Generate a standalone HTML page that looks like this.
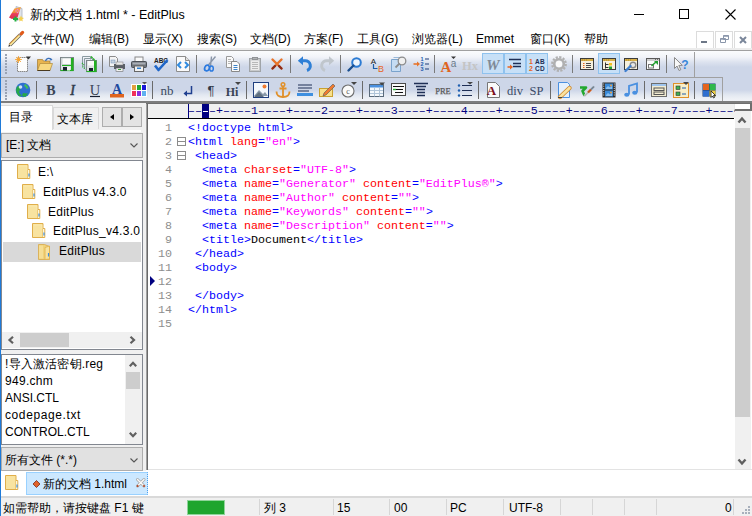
<!DOCTYPE html><html><head><meta charset="utf-8"><style>
*{margin:0;padding:0;box-sizing:border-box}
html,body{width:752px;height:516px;overflow:hidden;background:#f0f0f0}
body{position:relative;font-family:"Liberation Sans",sans-serif;font-size:12px;color:#000}
.a{position:absolute}
.t{position:absolute;white-space:nowrap;line-height:12px;height:12px}
.ico{position:absolute;overflow:visible}
.code{position:absolute;font-family:"Liberation Mono",monospace;font-size:11.667px;line-height:14px;height:14px;white-space:pre;color:#0000ff}
.ln{position:absolute;font-family:"Liberation Mono",monospace;font-size:11.667px;line-height:14px;height:14px;color:#8e8e8e;white-space:pre}
.r{color:#ff0000}.m{color:#ff00ff}.k{color:#000}
</style></head><body>
<div class="a" style="left:0px;top:0px;width:752px;height:48px;background:#fff"></div>
<svg class="ico" style="left:8px;top:5px" width="16" height="16" viewBox="0 0 16 16"><defs><linearGradient id="tg" x1="0" y1="0" x2="0" y2="1"><stop offset="0" stop-color="#f5a84a"/><stop offset="0.45" stop-color="#f08a3a"/><stop offset="0.55" stop-color="#e8405a"/><stop offset="1" stop-color="#e02a50"/></linearGradient></defs><path d="M8 1.5l6 2v9.5l-5 2.5z" fill="#dfe3ea" stroke="#aab2c0" stroke-width="0.8"/><path d="M1 12.5L6.5 3.5 13 2l-3.5 10.5L4 14z" fill="url(#tg)"/><circle cx="9.5" cy="4.5" r="0.8" fill="#f080e0"/><circle cx="8" cy="6" r="0.8" fill="#f080e0"/><circle cx="11" cy="6" r="0.8" fill="#f080e0"/><circle cx="9.5" cy="7.5" r="0.8" fill="#f080e0"/><path d="M5 14h5M7.5 11.5v5" stroke="#20b040" stroke-width="2"/><path d="M13 10.5l0.9 2 2.1 0.4-1.6 1.4 0.4 2.1-1.8-1-1.8 1 0.4-2.1-1.6-1.4 2.1-0.4z" fill="#f4d050"/></svg>
<div class="t" style="left:30px;top:9px;font-size:12.5px;color:#000;">新的文档 1.html * - EditPlus</div>
<div class="a" style="left:634px;top:14px;width:10px;height:1px;background:#000"></div>
<div class="a" style="left:679px;top:9px;width:10px;height:10px;border:1px solid #000"></div>
<svg class="ico" style="left:725px;top:9px" width="11" height="11" viewBox="0 0 11 11"><path d="M0.5 0.5L10.5 10.5M10.5 0.5L0.5 10.5" stroke="#000" stroke-width="1.1"/></svg>
<div class="t" style="left:31px;top:33px;font-size:12px;color:#000;">文件(W)</div>
<div class="t" style="left:89px;top:33px;font-size:12px;color:#000;">编辑(B)</div>
<div class="t" style="left:143px;top:33px;font-size:12px;color:#000;">显示(X)</div>
<div class="t" style="left:197px;top:33px;font-size:12px;color:#000;">搜索(S)</div>
<div class="t" style="left:250px;top:33px;font-size:12px;color:#000;">文档(D)</div>
<div class="t" style="left:304px;top:33px;font-size:12px;color:#000;">方案(F)</div>
<div class="t" style="left:357px;top:33px;font-size:12px;color:#000;">工具(G)</div>
<div class="t" style="left:412px;top:33px;font-size:12px;color:#000;">浏览器(L)</div>
<div class="t" style="left:476px;top:33px;font-size:12px;color:#000;">Emmet</div>
<div class="t" style="left:530px;top:33px;font-size:12px;color:#000;">窗口(K)</div>
<div class="t" style="left:584px;top:33px;font-size:12px;color:#000;">帮助</div>
<svg class="ico" style="left:8px;top:31px" width="16" height="16" viewBox="0 0 16 16"><path d="M2 14L12 4" stroke="#5a5a5a" stroke-width="3.4"/><path d="M2 14L12 4" stroke="#f8e8a0" stroke-width="2.2"/><path d="M1.3 13.3L11.3 3.3" stroke="#e8942a" stroke-width="1"/><path d="M11.5 4.5L13.5 2.5" stroke="#9aa0aa" stroke-width="3"/><path d="M13.2 2.8L14.6 1.4" stroke="#e05a1a" stroke-width="3.2" stroke-linecap="round"/><path d="M0.3 15.7L1 13.5 2.5 15z" fill="#222"/></svg>
<div class="a" style="left:696px;top:31px;width:18px;height:18px;border:1px solid #dcdcdc;background:#fff"></div>
<div class="a" style="left:715px;top:31px;width:18px;height:18px;border:1px solid #dcdcdc;background:#fff"></div>
<div class="a" style="left:734px;top:31px;width:18px;height:18px;border:1px solid #dcdcdc;background:#fff"></div>
<div class="a" style="left:701px;top:41px;width:6px;height:2px;background:#6d7787"></div>
<svg class="ico" style="left:720px;top:35px" width="9" height="8" viewBox="0 0 9 8"><path d="M3.5 0.5h5v4h-5zM0.5 3.5h5v4h-5z" fill="#fff" stroke="#8a96aa" stroke-width="1"/><path d="M3.5 1h5M0.5 4h5" stroke="#8a96aa" stroke-width="1.3"/></svg>
<svg class="ico" style="left:739px;top:36px" width="8" height="8" viewBox="0 0 8 8"><path d="M1 1l6 6M7 1L1 7" stroke="#7a869a" stroke-width="2"/></svg>
<div class="a" style="left:0px;top:48px;width:752px;height:2px;background:#ececec"></div>
<div class="a" style="left:0px;top:50px;width:752px;height:1px;background:#a0a0a0"></div>
<div class="a" style="left:0px;top:51px;width:752px;height:50px;background:linear-gradient(#fbfcfd 0px,#f2f4f9 6px,#dde3ef 11px,#cdd6e8 16px,#cdd6e8 39px,#e3e8f1 44px,#eef1f6 48px,#f0f2f7 50px)"></div>
<div class="a" style="left:0px;top:77px;width:723px;height:24px;border-top:1px solid #a0a0a0;border-right:1px solid #a0a0a0"></div>
<div class="a" style="left:694px;top:52px;width:1px;height:25px;background:#a0a0a0"></div>
<div class="a" style="left:0px;top:101px;width:752px;height:2px;background:#7d7d7d"></div>
<div class="a" style="left:5px;top:54px;width:2px;height:2px;background:#9aa3b3"></div>
<div class="a" style="left:5px;top:57px;width:2px;height:2px;background:#9aa3b3"></div>
<div class="a" style="left:5px;top:60px;width:2px;height:2px;background:#9aa3b3"></div>
<div class="a" style="left:5px;top:63px;width:2px;height:2px;background:#9aa3b3"></div>
<div class="a" style="left:5px;top:66px;width:2px;height:2px;background:#9aa3b3"></div>
<div class="a" style="left:5px;top:69px;width:2px;height:2px;background:#9aa3b3"></div>
<div class="a" style="left:5px;top:72px;width:2px;height:2px;background:#9aa3b3"></div>
<div class="a" style="left:5px;top:80px;width:2px;height:2px;background:#9aa3b3"></div>
<div class="a" style="left:5px;top:83px;width:2px;height:2px;background:#9aa3b3"></div>
<div class="a" style="left:5px;top:86px;width:2px;height:2px;background:#9aa3b3"></div>
<div class="a" style="left:5px;top:89px;width:2px;height:2px;background:#9aa3b3"></div>
<div class="a" style="left:5px;top:92px;width:2px;height:2px;background:#9aa3b3"></div>
<div class="a" style="left:5px;top:95px;width:2px;height:2px;background:#9aa3b3"></div>
<div class="a" style="left:5px;top:98px;width:2px;height:2px;background:#9aa3b3"></div>
<div class="a" style="left:482px;top:53px;width:22px;height:21px;background:#c7e0f7;border:1px solid #8fc2ee"></div>
<div class="a" style="left:504px;top:53px;width:22px;height:21px;background:#c7e0f7;border:1px solid #8fc2ee"></div>
<div class="a" style="left:526px;top:53px;width:22px;height:21px;background:#c7e0f7;border:1px solid #8fc2ee"></div>
<div class="a" style="left:598px;top:53px;width:22px;height:21px;background:#c7e0f7;border:1px solid #8fc2ee"></div>
<svg class="ico" style="left:15px;top:56px" width="16" height="16" viewBox="0 0 16 16"><path d="M2.5 1.5h10v14h-10z" fill="#fdfdfd" stroke="#8a8a8a" stroke-dasharray="1.5 0.5"/><circle cx="3.5" cy="3.5" r="2" fill="#fbc04a"/><path d="M3.5 0v7M0 3.5h7M1 1l5 5M6 1L1 6" stroke="#f5a030" stroke-width="0.8"/><path d="M11 0.5h5l-2.5 3z" fill="#333"/></svg>
<svg class="ico" style="left:37px;top:56px" width="16" height="16" viewBox="0 0 16 16"><path d="M0.5 3.5h5l1 1.5h6.5v9.5H0.5z" fill="#e8b450" stroke="#a07a30" stroke-width="0.7"/><path d="M3 7.5h12.5l-2.5 7H0.5z" fill="#f8d880" stroke="#b08a3a" stroke-width="0.7"/><path d="M0.5 14.5h12.5" stroke="#4a3a20" stroke-width="1"/><path d="M8.5 5c1-3 4-3.5 5.5-1.5" fill="none" stroke="#3a70b8" stroke-width="1.3"/><path d="M13 2l2.5 1.2-1.8 1.8z" fill="#3a70b8"/></svg>
<svg class="ico" style="left:59px;top:56px" width="16" height="16" viewBox="0 0 16 16"><rect x="1.5" y="1.5" width="13" height="13" fill="#dfe3e6" stroke="#7d8488"/><rect x="3" y="2" width="9" height="6.5" fill="#fafafa" stroke="#9aa" stroke-width="0.5"/><path d="M3 9.5h9" stroke="#22b022" stroke-width="1"/><rect x="12" y="2" width="2.5" height="12.5" fill="#22b022"/><path d="M1.5 14.5h13" stroke="#22b022" stroke-width="1.2"/><rect x="4" y="11" width="4" height="3.5" fill="#1a2030"/><rect x="8" y="11" width="3" height="3.5" fill="#f4f4f4"/></svg>
<svg class="ico" style="left:81px;top:56px" width="16" height="16" viewBox="0 0 16 16"><path d="M1.5 0.5h8v3M1.5 0.5v10" fill="none" stroke="#8a9aa0"/><path d="M3.5 2.5h8v3M3.5 2.5v10" fill="none" stroke="#8a9aa0"/><path d="M1.5 10.5l3 3M1 7l2 2" stroke="#22b022" stroke-width="1.2" stroke-dasharray="1 1"/><rect x="5.5" y="4.5" width="10" height="11" fill="#dfe3e6" stroke="#7d8488"/><rect x="7" y="5" width="6" height="4.5" fill="#fafafa"/><rect x="13" y="4.5" width="2.5" height="11" fill="#22b022"/><path d="M5.5 15.5h10" stroke="#22b022" stroke-width="1.2"/><rect x="8" y="12" width="4" height="3" fill="#1a2030"/><path d="M10 0.5l1.5 1.5M12 2.5l1.5 1.5" stroke="#22b022" stroke-width="1.5"/></svg>
<svg class="ico" style="left:109px;top:56px" width="16" height="16" viewBox="0 0 16 16"><path d="M0.5 0.5h6l2 2v8h-8z" fill="#f4f4f4" stroke="#8c8c8c"/><rect x="2" y="4" width="4" height="3" fill="#c8d3e0" stroke="#6f8fb8" stroke-width="0.5"/>
<rect x="5" y="8" width="11" height="5" fill="#5a5f66"/><rect x="7" y="6" width="7" height="3" fill="#e8e8e8" stroke="#777" stroke-width="0.5"/><rect x="7" y="12" width="7" height="3.5" fill="#f0f0f0" stroke="#555" stroke-width="0.5"/><rect x="9" y="13" width="3" height="1" fill="#3b9c3b"/></svg>
<svg class="ico" style="left:131px;top:56px" width="16" height="16" viewBox="0 0 16 16"><rect x="4" y="1" width="8" height="5" fill="#fafafa" stroke="#888"/><rect x="0.5" y="5.5" width="15" height="6" rx="1" fill="#6e747c" stroke="#4b5057"/>
<rect x="1.5" y="6.5" width="13" height="2" fill="#a9aeb5"/><rect x="3.5" y="10" width="9" height="5.5" fill="#f2f2f2" stroke="#666"/><rect x="6" y="11.5" width="4" height="1.5" fill="#2f7fd0"/></svg>
<svg class="ico" style="left:153px;top:56px" width="16" height="16" viewBox="0 0 16 16"><text x="8" y="6.5" font-family="Liberation Sans" font-size="6.5" font-weight="bold" text-anchor="middle" fill="#222">ABC</text>
<path d="M2 9.5l3.5 4.5L14.5 4" fill="none" stroke="#1f66c8" stroke-width="2.6" stroke-linejoin="round"/></svg>
<svg class="ico" style="left:175px;top:56px" width="16" height="16" viewBox="0 0 16 16"><path d="M1.5 0.5h9l4 4v11h-13z" fill="#fafafa" stroke="#8c8c8c"/><path d="M10.5 0.5v4h4" fill="#e0e0e0" stroke="#8c8c8c"/>
<path d="M6 6l-3 3 3 3M10 6l3 3-3 3" fill="none" stroke="#2f8ae0" stroke-width="2"/></svg>
<svg class="ico" style="left:203px;top:56px" width="16" height="16" viewBox="0 0 16 16"><path d="M5 9.5L12.5 0.5M7.5 10L8.5 0.5" stroke="#8a96a8" stroke-width="1.4"/><ellipse cx="4" cy="12" rx="2.3" ry="3" fill="none" stroke="#2b7ae0" stroke-width="1.7" transform="rotate(20 4 12)"/><ellipse cx="8.5" cy="12.5" rx="1.8" ry="2.6" fill="none" stroke="#2b7ae0" stroke-width="1.5"/></svg>
<svg class="ico" style="left:225px;top:56px" width="16" height="16" viewBox="0 0 16 16"><path d="M1.5 0.5h5l2 2v9h-7z" fill="#fafafa" stroke="#999"/><path d="M3 3.5h3M3 5.5h4M3 7.5h4" stroke="#b5b5b5"/><path d="M6.5 5.5h5.5l2.5 2.5v7.5h-8z" fill="#fafafa" stroke="#888"/><path d="M8.5 9.5h4M8.5 11.5h4M8.5 13.5h4" stroke="#3b82c8"/></svg>
<svg class="ico" style="left:247px;top:56px" width="16" height="16" viewBox="0 0 16 16"><rect x="2.5" y="2.5" width="11" height="13" fill="#c8cacc" stroke="#a0a4a8"/><rect x="5.5" y="1.5" width="5" height="2" fill="#b0b3b6" stroke="#909396"/><rect x="4" y="4.5" width="8" height="9.5" fill="#ececec"/><path d="M5 6.5h6M5 8.5h6M5 10.5h6M5 12.5h6" stroke="#b8b8b8"/></svg>
<svg class="ico" style="left:269px;top:56px" width="16" height="16" viewBox="0 0 16 16"><path d="M3.5 3.5l9 9M12.5 3.5l-9 9" stroke="#e8742a" stroke-width="2.4" stroke-linecap="round"/><path d="M3.5 12.5l2.5-2.5M12.5 12.5L10 10" stroke="#8a2a1a" stroke-width="2.2" stroke-linecap="round"/></svg>
<svg class="ico" style="left:297px;top:56px" width="16" height="16" viewBox="0 0 16 16"><path d="M5 4.8h3a5 5 0 0 1 2 9.7" fill="none" stroke="#2e7fd6" stroke-width="3"/><path d="M0.8 4.8L6 0.3v9z" fill="#2e7fd6"/></svg>
<svg class="ico" style="left:319px;top:56px" width="16" height="16" viewBox="0 0 16 16"><path d="M11 4.8H8a5 5 0 0 0 -2 9.7" fill="none" stroke="#c0c6cc" stroke-width="3"/><path d="M15.2 4.8L10 0.3v9z" fill="#c0c6cc"/></svg>
<svg class="ico" style="left:347px;top:56px" width="16" height="16" viewBox="0 0 16 16"><circle cx="9.5" cy="6.5" r="4.3" fill="#eef5fc" stroke="#2c7bd3" stroke-width="2"/><path d="M6.5 9.5L1.5 14.5" stroke="#1b4f8f" stroke-width="2.4" stroke-linecap="round"/></svg>
<svg class="ico" style="left:369px;top:56px" width="16" height="16" viewBox="0 0 16 16"><text x="4.5" y="7.5" font-family="Liberation Sans" font-size="8" text-anchor="middle" fill="#222">A</text>
<path d="M4.5 8v4.5h4" fill="none" stroke="#1b5ea8" stroke-width="1.2"/><text x="12" y="15.5" font-family="Liberation Sans" font-size="9" text-anchor="middle" fill="#e8641e">B</text></svg>
<svg class="ico" style="left:391px;top:56px" width="16" height="16" viewBox="0 0 16 16"><path d="M0.5 3.5h9v12h-9z" fill="#c5dcf3" stroke="#7aa3cc"/><path d="M2.5 1.5h9v3" fill="none" stroke="#9bb9d8"/>
<circle cx="11" cy="5" r="3.8" fill="#f0f0f0" stroke="#8c8c8c" stroke-width="1.3"/><path d="M8.5 7.5l-4 4" stroke="#8c8c8c" stroke-width="1.8"/></svg>
<svg class="ico" style="left:413px;top:56px" width="16" height="16" viewBox="0 0 16 16"><path d="M0.5 8h5" stroke="#e8742a" stroke-width="1.6"/><path d="M4 5.5l3 2.5-3 2.5z" fill="#e8742a"/>
<text x="9" y="5" font-family="Liberation Sans" font-size="5.5" font-weight="bold" text-anchor="middle" fill="#1f5cae">1</text><text x="9" y="10" font-family="Liberation Sans" font-size="5.5" font-weight="bold" text-anchor="middle" fill="#1f5cae">2</text><text x="9" y="15" font-family="Liberation Sans" font-size="5.5" font-weight="bold" text-anchor="middle" fill="#1f5cae">3</text>
<path d="M12 3h4M12 8h4M12 13h4" stroke="#1f3f7a" stroke-width="1.2"/></svg>
<svg class="ico" style="left:441px;top:56px" width="16" height="16" viewBox="0 0 16 16"><text x="5" y="16" font-family="Liberation Serif" font-size="15" font-weight="bold" text-anchor="middle" fill="#e0641e">A</text><text x="12.5" y="10.5" font-family="Liberation Sans" font-size="10" text-anchor="middle" fill="#6a7a8a">a</text><path d="M10 0.5h5l-2.5 2.5z" fill="#333"/></svg>
<svg class="ico" style="left:463px;top:56px" width="16" height="16" viewBox="0 0 16 16"><text x="7" y="14" font-family="Liberation Serif" font-size="12.5" font-weight="bold" text-anchor="middle" fill="#c4c4c4">Hx</text></svg>
<svg class="ico" style="left:485px;top:56px" width="16" height="16" viewBox="0 0 16 16"><text x="8" y="14" font-family="Liberation Serif" font-size="15" font-style="italic" font-weight="bold" text-anchor="middle" fill="#7f8a96">W</text></svg>
<svg class="ico" style="left:507px;top:56px" width="16" height="16" viewBox="0 0 16 16"><path d="M2 3.5h12M6 7.5h8M6 10.5h8" stroke="#1f2f55" stroke-width="1.5"/><path d="M0.5 11h3" stroke="#e8641e" stroke-width="1.5"/><path d="M3 8.5l3 2.5-3 2.5z" fill="#e8641e"/></svg>
<svg class="ico" style="left:529px;top:56px" width="16" height="16" viewBox="0 0 16 16"><text x="2" y="7.5" font-family="Liberation Sans" font-size="7" font-weight="bold" text-anchor="middle" fill="#e8641e">1</text><text x="2" y="15" font-family="Liberation Sans" font-size="7" font-weight="bold" text-anchor="middle" fill="#e8641e">2</text><text x="11" y="7.5" font-family="Liberation Sans" font-size="6.5" font-weight="bold" text-anchor="middle" fill="#1f2f55" letter-spacing="0.3">AB</text><text x="11" y="15" font-family="Liberation Sans" font-size="6.5" font-weight="bold" text-anchor="middle" fill="#1f2f55" letter-spacing="0.3">CD</text></svg>
<svg class="ico" style="left:551px;top:56px" width="16" height="16" viewBox="0 0 16 16"><circle cx="8" cy="8" r="4.8" fill="none" stroke="#b0b0b0" stroke-width="2.6"/><circle cx="8" cy="8" r="6.8" fill="none" stroke="#b0b0b0" stroke-width="2.2" stroke-dasharray="2.2 1.36"/><circle cx="8" cy="8" r="3.2" fill="#fafafa"/></svg>
<svg class="ico" style="left:579px;top:56px" width="16" height="16" viewBox="0 0 16 16"><rect x="1.5" y="2.5" width="13" height="11" fill="#f6f0de" stroke="#3c3c3c"/><rect x="2" y="3" width="12" height="2" fill="#d8b048"/><path d="M3 4h1M5 4h1M7 4h1" stroke="#8a6a20" stroke-width="0.6"/><path d="M4 7.5h1.5M4 9.5h1.5M4 11.5h1.5" stroke="#e8641e"/><path d="M7 7.5h5M7 9.5h5M7 11.5h5" stroke="#4a4a4a"/></svg>
<svg class="ico" style="left:601px;top:56px" width="16" height="16" viewBox="0 0 16 16"><rect x="1.5" y="2.5" width="13" height="11" fill="#f6f0de" stroke="#3c3c3c"/><rect x="2" y="3" width="12" height="2" fill="#d8b048"/><path d="M3 4h1M5 4h1M7 4h1" stroke="#8a6a20" stroke-width="0.6"/><path d="M4.5 6.5v6M4.5 8.5h3M4.5 11.5h3" stroke="#333" fill="none"/><rect x="8" y="7" width="3" height="2.5" fill="#f0c020"/><rect x="8" y="10.5" width="3" height="2.5" fill="#22a030"/></svg>
<svg class="ico" style="left:623px;top:56px" width="16" height="16" viewBox="0 0 16 16"><rect x="1.5" y="2.5" width="13" height="11" fill="#f6f0de" stroke="#3c3c3c"/><rect x="2" y="3" width="12" height="2" fill="#d8b048"/><path d="M3 4h1M5 4h1M7 4h1" stroke="#8a6a20" stroke-width="0.6"/><circle cx="10" cy="9" r="2.8" fill="#e8e8e8" stroke="#8a8a8a" stroke-width="1.4"/><path d="M2.5 15l5-5" stroke="#3f7fd0" stroke-width="2.4" stroke-linecap="round"/></svg>
<svg class="ico" style="left:645px;top:56px" width="16" height="16" viewBox="0 0 16 16"><rect x="1.5" y="2.5" width="13" height="11" fill="#fafafa" stroke="#5a5a5a"/><path d="M2 4h12" stroke="#cfcfcf" stroke-width="2"/><path d="M10 3.5h1M12 3.5h1" stroke="#555" stroke-width="0.8"/><rect x="3.5" y="8.5" width="5" height="3.5" fill="#fff" stroke="#777"/><path d="M6.5 10l5-4.5" stroke="#22a030" stroke-width="1.6"/><path d="M9 5h4v4z" fill="#22a030"/></svg>
<svg class="ico" style="left:673px;top:56px" width="16" height="16" viewBox="0 0 16 16"><path d="M1.5 1.5v11l2.5-2.5 2 4.5 1.8-0.8-2-4.3h3.5z" fill="#f8f8f8" stroke="#8a8a8a"/><text x="12" y="12.5" font-family="Liberation Sans" font-size="12" font-weight="bold" text-anchor="middle" fill="#3a86d8">?</text></svg>
<div class="a" style="left:102px;top:55px;width:1px;height:18px;background:#7a7a7a"></div>
<div class="a" style="left:196px;top:55px;width:1px;height:18px;background:#7a7a7a"></div>
<div class="a" style="left:290px;top:55px;width:1px;height:18px;background:#7a7a7a"></div>
<div class="a" style="left:340px;top:55px;width:1px;height:18px;background:#7a7a7a"></div>
<div class="a" style="left:434px;top:55px;width:1px;height:18px;background:#7a7a7a"></div>
<div class="a" style="left:572px;top:55px;width:1px;height:18px;background:#7a7a7a"></div>
<div class="a" style="left:666px;top:55px;width:1px;height:18px;background:#7a7a7a"></div>
<svg class="ico" style="left:15px;top:82px" width="16" height="16" viewBox="0 0 16 16"><circle cx="8" cy="8" r="7.3" fill="#2f6fd0"/><path d="M3 4c2 0 3 1 2.5 3s-2 2-1 4 2 1 2 3l-2 0.5C2.5 13 1 10.5 1 8c0-1.5 1-3 2-4z" fill="#27a84a"/><path d="M10 2c2 1 3 2 3.5 4l-2 1-1-2-1.5-1z" fill="#3fbf5a"/><path d="M8 11c2 0 4 1 5 0l-2 3.5c-1 0.5-3 0.5-4-1z" fill="#27a84a"/><circle cx="5.5" cy="5" r="1.8" fill="#eaf3ff" opacity="0.85"/></svg>
<svg class="ico" style="left:43px;top:82px" width="16" height="16" viewBox="0 0 16 16"><text x="8" y="13" font-family="Liberation Serif" font-size="14" font-weight="bold" text-anchor="middle" fill="#3a4555">B</text></svg>
<svg class="ico" style="left:65px;top:82px" width="16" height="16" viewBox="0 0 16 16"><text x="7.5" y="13" font-family="Liberation Serif" font-size="14" font-style="italic" text-anchor="middle" fill="#2f3a4a" stroke="#2f3a4a" stroke-width="0.5">I</text></svg>
<svg class="ico" style="left:87px;top:82px" width="16" height="16" viewBox="0 0 16 16"><text x="8" y="12.5" font-family="Liberation Serif" font-size="14.5" text-anchor="middle" fill="#3a4555">U</text><path d="M3 14.5h10" stroke="#1a2030" stroke-width="1.2"/></svg>
<svg class="ico" style="left:109px;top:82px" width="16" height="16" viewBox="0 0 16 16"><text x="8" y="11.5" font-family="Liberation Serif" font-size="14" font-weight="bold" text-anchor="middle" fill="#1f4a9f">A</text><rect x="1" y="12" width="14" height="3.5" fill="#e0641e"/></svg>
<svg class="ico" style="left:131px;top:82px" width="16" height="16" viewBox="0 0 16 16"><rect x="0" y="2" width="16" height="13" fill="#fff"/><rect x="1" y="3" width="4" height="5" fill="#e0a040"/><rect x="6" y="3" width="4" height="5" fill="#20a830"/><rect x="11" y="3" width="4" height="5" fill="#1818d8"/><rect x="1" y="9" width="4" height="5" fill="#f0305a"/><rect x="6" y="9" width="4" height="5" fill="#8a30e0"/><rect x="11" y="9" width="4" height="5" fill="#60b0f0"/><path d="M11 0h5l-2.5 2.5z" fill="#555"/></svg>
<svg class="ico" style="left:159px;top:82px" width="16" height="16" viewBox="0 0 16 16"><text x="8" y="13" font-family="Liberation Serif" font-size="13" text-anchor="middle" fill="#3a4a5e">nb</text></svg>
<svg class="ico" style="left:181px;top:82px" width="16" height="16" viewBox="0 0 16 16"><path d="M10.5 4v7.5H5" fill="none" stroke="#1f3f8f" stroke-width="1.5"/><path d="M6 8.5l-3.5 3 3.5 3z" fill="#1f3f8f"/></svg>
<svg class="ico" style="left:203px;top:82px" width="16" height="16" viewBox="0 0 16 16"><text x="8" y="13" font-family="Liberation Sans" font-size="13" text-anchor="middle" fill="#2f3a4a">¶</text></svg>
<svg class="ico" style="left:225px;top:82px" width="16" height="16" viewBox="0 0 16 16"><text x="7" y="14" font-family="Liberation Serif" font-size="12" font-weight="bold" text-anchor="middle" fill="#3a4555">Hi</text><path d="M10 0h6l-3 3z" fill="#444"/></svg>
<svg class="ico" style="left:253px;top:82px" width="16" height="16" viewBox="0 0 16 16"><rect x="0.5" y="0.5" width="15" height="15" fill="#f4f8fc" stroke="#1f3f7f"/><path d="M1 14l5-6 4 4 2-2 3 4z" fill="#8a9aaa"/><path d="M1 15l5-5 5 5z" fill="#5f6f7f"/><circle cx="11.5" cy="4.5" r="2" fill="#f07a30"/></svg>
<svg class="ico" style="left:275px;top:82px" width="16" height="16" viewBox="0 0 16 16"><circle cx="8" cy="2.5" r="1.8" fill="none" stroke="#e0902a" stroke-width="1.5"/><path d="M8 4v11M4.5 6.5h7M1.5 9.5c0 4 3 5.5 6.5 5.5s6.5-1.5 6.5-5.5" fill="none" stroke="#e0902a" stroke-width="1.8"/></svg>
<svg class="ico" style="left:297px;top:82px" width="16" height="16" viewBox="0 0 16 16"><path d="M1 3h14M1 6h14M1 9h11" stroke="#1f2f55" stroke-width="1.2"/><rect x="0" y="11" width="16" height="3" fill="#3f8fdf"/></svg>
<svg class="ico" style="left:319px;top:82px" width="16" height="16" viewBox="0 0 16 16"><rect x="0.5" y="6.5" width="13" height="8" fill="#f8e08a" stroke="#c9a030"/><path d="M5 11l9-9 2 2-9 9-3 1z" fill="#f07a30" stroke="#555" stroke-width="0.6"/></svg>
<svg class="ico" style="left:341px;top:82px" width="16" height="16" viewBox="0 0 16 16"><circle cx="7" cy="9" r="6" fill="#fafafa" stroke="#6d6d6d" stroke-width="1.1"/><text x="7" y="12" font-family="Liberation Serif" font-size="8" text-anchor="middle" fill="#555">c</text><path d="M10 0h6l-3 3z" fill="#444"/></svg>
<svg class="ico" style="left:369px;top:82px" width="16" height="16" viewBox="0 0 16 16"><rect x="0.5" y="2.5" width="14" height="12" fill="#f4f8fc" stroke="#5a6a7a"/><rect x="1" y="3" width="13" height="2.5" fill="#4a90e0"/><path d="M5.5 5.5v9M10.5 5.5v9M1 8.5h13M1 11.5h13" stroke="#b0c4d8"/><path d="M10 0.5h6l-3 3z" fill="#444"/></svg>
<svg class="ico" style="left:391px;top:82px" width="16" height="16" viewBox="0 0 16 16"><rect x="0.5" y="1.5" width="14" height="12" fill="#fafafa" stroke="#4a4a4a"/><path d="M2 4.5h11M4 7.5h8M4 10.5h8" stroke="#111"/><path d="M2 7.5h3" stroke="#22b030" stroke-width="1.4"/></svg>
<svg class="ico" style="left:413px;top:82px" width="16" height="16" viewBox="0 0 16 16"><path d="M1 1.5h14M3 4.5h10M4 7.5h8M4 10.5h8M4 13.5h8" stroke="#1f2f55" stroke-width="1.3"/></svg>
<svg class="ico" style="left:435px;top:82px" width="16" height="16" viewBox="0 0 16 16"><text x="8" y="11.5" font-family="Liberation Serif" font-size="8.5" text-anchor="middle" fill="#5a5a5a" stroke="#5a5a5a" stroke-width="0.25">PRE</text></svg>
<svg class="ico" style="left:457px;top:82px" width="16" height="16" viewBox="0 0 16 16"><circle cx="2" cy="3.5" r="1.2" fill="#1f5fb0"/><circle cx="2" cy="8.5" r="1.2" fill="#1f5fb0"/><circle cx="2" cy="13.5" r="1.2" fill="#1f5fb0"/><path d="M5 3.5h10M5 8.5h10M5 13.5h10" stroke="#1f2f55" stroke-width="1.2"/><path d="M10 0h6l-3 2.5z" fill="#444"/></svg>
<svg class="ico" style="left:485px;top:82px" width="16" height="16" viewBox="0 0 16 16"><path d="M2.5 0.5h8l4 4v11h-12z" fill="#fafafa" stroke="#777"/><text x="6.5" y="13" font-family="Liberation Serif" font-size="13" font-weight="bold" text-anchor="middle" fill="#7a1020">A</text></svg>
<svg class="ico" style="left:507px;top:82px" width="16" height="16" viewBox="0 0 16 16"><text x="8" y="12.5" font-family="Liberation Serif" font-size="12.5" text-anchor="middle" fill="#3a4a66">div</text></svg>
<svg class="ico" style="left:529px;top:82px" width="16" height="16" viewBox="0 0 16 16"><text x="7.5" y="12.5" font-family="Liberation Serif" font-size="12.5" text-anchor="middle" fill="#3a4a66">SP</text></svg>
<svg class="ico" style="left:557px;top:82px" width="16" height="16" viewBox="0 0 16 16"><path d="M1.5 0.5h9l2 2v13h-11z" fill="#e4f0fc" stroke="#4a90e0"/><path d="M3 15l9.5-9" stroke="#d08a30" stroke-width="4.4" stroke-linecap="round"/><path d="M3 15l9.5-9" stroke="#f8e2a0" stroke-width="2.6" stroke-linecap="round"/><path d="M1 15.5h4" stroke="#444" stroke-width="1"/></svg>
<svg class="ico" style="left:579px;top:82px" width="16" height="16" viewBox="0 0 16 16"><path d="M1 5.5h6l-3.5 3.5 2 4.5" fill="none" stroke="#22a830" stroke-width="2.6" stroke-linejoin="round"/><path d="M5.5 14L9 10.5" stroke="#d8d8d8" stroke-width="2.4"/><path d="M9 10.5l3-3" stroke="#e0641e" stroke-width="2.4"/><path d="M12 7.5l3-3" stroke="#8a9aaa" stroke-width="2"/><path d="M5 14.5L15 4.5" stroke="#333" stroke-width="0.6" opacity="0.6"/></svg>
<svg class="ico" style="left:601px;top:82px" width="16" height="16" viewBox="0 0 16 16"><rect x="1.5" y="0.5" width="13" height="15" fill="#2a2a2a"/><rect x="4" y="1.5" width="8" height="6" fill="#3a8ad8"/><rect x="4" y="8.5" width="8" height="6" fill="#3a8ad8"/><path d="M5 6l2-2 2 1.5 2-1.5v3H5zM5 13l2-2 2 1.5 2-1.5v3H5z" fill="#8ac0f0"/><circle cx="10" cy="3.5" r="1" fill="#f0a040"/><circle cx="10" cy="10.5" r="1" fill="#f0a040"/><path d="M2.75 1.5v13M13.25 1.5v13" stroke="#eee" stroke-width="1" stroke-dasharray="1 1.2"/></svg>
<svg class="ico" style="left:623px;top:82px" width="16" height="16" viewBox="0 0 16 16"><path d="M6 12.5V4l8-2.5v9" fill="none" stroke="#4a90e0" stroke-width="1.8"/><ellipse cx="3.8" cy="12.8" rx="2.6" ry="2" fill="#4a90e0"/><ellipse cx="11.8" cy="10.8" rx="2.6" ry="2" fill="#4a90e0"/></svg>
<svg class="ico" style="left:651px;top:82px" width="16" height="16" viewBox="0 0 16 16"><rect x="0.5" y="1.5" width="15" height="13" fill="#f2ecd2" stroke="#6d6d6d"/><rect x="1" y="2" width="14" height="2" fill="#9fc5ef"/><rect x="3" y="6" width="10" height="2.5" fill="none" stroke="#555"/><rect x="3" y="10" width="10" height="2.5" fill="none" stroke="#555"/></svg>
<svg class="ico" style="left:673px;top:82px" width="16" height="16" viewBox="0 0 16 16"><rect x="0.5" y="1.5" width="15" height="14" fill="#f8eec8" stroke="#e0902a"/><rect x="3" y="4" width="4" height="3.5" fill="#3fae4f" stroke="#333" stroke-width="0.6"/><rect x="3" y="10" width="4" height="3.5" fill="#3fae4f" stroke="#333" stroke-width="0.6"/><path d="M9 6h4M9 12h4" stroke="#1f5fb0" stroke-width="1.2"/><path d="M10 0h6l-3 3z" fill="#444"/></svg>
<svg class="ico" style="left:701px;top:82px" width="16" height="16" viewBox="0 0 16 16"><rect x="1.5" y="1.5" width="13" height="13" fill="#1f3f6f"/><rect x="2" y="2" width="6" height="6" fill="#e5641e"/><rect x="8.5" y="2" width="6" height="6" fill="#2fb84a"/><rect x="2" y="8.5" width="6" height="6" fill="#2f6fd0"/><rect x="8.5" y="8.5" width="6" height="6" fill="#f0d040"/><path d="M10 9v6.5l1.5-1.5 1 2 1-0.5-1-2h2z" fill="#fff" stroke="#111" stroke-width="0.8"/></svg>
<div class="a" style="left:36px;top:81px;width:1px;height:18px;background:#6a6a6a"></div>
<div class="a" style="left:152px;top:81px;width:1px;height:18px;background:#6a6a6a"></div>
<div class="a" style="left:246px;top:81px;width:1px;height:18px;background:#6a6a6a"></div>
<div class="a" style="left:362px;top:81px;width:1px;height:18px;background:#6a6a6a"></div>
<div class="a" style="left:478px;top:81px;width:1px;height:18px;background:#6a6a6a"></div>
<div class="a" style="left:550px;top:81px;width:1px;height:18px;background:#6a6a6a"></div>
<div class="a" style="left:644px;top:81px;width:1px;height:18px;background:#6a6a6a"></div>
<div class="a" style="left:694px;top:81px;width:1px;height:18px;background:#6a6a6a"></div>
<div class="a" style="left:1px;top:103px;width:145px;height:413px;background:#f0f0f0"></div>
<div class="a" style="left:53px;top:107px;width:46px;height:22px;background:#f0f0f0;border:1px solid #d9d9d9;border-bottom:none"></div>
<div class="a" style="left:1px;top:105px;width:52px;height:25px;background:#fff;border-top:1px solid #d9d9d9;border-right:1px solid #d9d9d9"></div>
<div class="t" style="left:9px;top:111px;font-size:12px;color:#000;">目录</div>
<div class="t" style="left:57px;top:113px;font-size:12px;color:#000;">文本库</div>
<div class="a" style="left:102px;top:107px;width:20px;height:20px;background:#e3e3e3;border:1px solid #adadad"></div>
<div class="a" style="left:122px;top:107px;width:20px;height:20px;background:#e3e3e3;border:1px solid #adadad"></div>
<svg class="ico" style="left:110px;top:114px" width="4" height="6" viewBox="0 0 4 6"><path d="M4 0v6L0 3z" fill="#000"/></svg>
<svg class="ico" style="left:130px;top:114px" width="4" height="6" viewBox="0 0 4 6"><path d="M0 0v6L4 3z" fill="#000"/></svg>
<div class="a" style="left:1px;top:130px;width:140px;height:2px;background:#fff"></div>
<div class="a" style="left:1px;top:133px;width:142px;height:25px;background:#e1e1e1;border:1px solid #adadad"></div>
<div class="t" style="left:6px;top:139px;font-size:12px;color:#000;">[E:] 文档</div>
<svg class="ico" style="left:130px;top:143px" width="8" height="5" viewBox="0 0 8 5"><path d="M0.5 0.5L4 4 7.5 0.5" fill="none" stroke="#555" stroke-width="1.1"/></svg>
<div class="a" style="left:1px;top:160px;width:142px;height:190px;background:#fff;border:1px solid #828790"></div>
<svg class="ico" style="left:17px;top:164px" width="14" height="15" viewBox="0 0 14 15"><path d="M0.5 0.5h10.5v14h-10.5z" fill="#f8e3a0" stroke="#e0ae4a"/><path d="M11 5.5h1.8v9H11" fill="#fdf6dc" stroke="#e0ae4a"/><path d="M12 9.5v3" stroke="#3f8fe0" stroke-width="1.2"/><path d="M2 2h8v4" fill="none" stroke="#fdf0c0" stroke-width="0.8" opacity="0.6"/></svg>
<div class="a" style="left:2px;top:164px;width:139px;height:16px;overflow:hidden"><div class="t" style="left:36px;top:2px;letter-spacing:0.25px">E:\</div></div>
<svg class="ico" style="left:22px;top:184px" width="14" height="15" viewBox="0 0 14 15"><path d="M0.5 0.5h10.5v14h-10.5z" fill="#f8e3a0" stroke="#e0ae4a"/><path d="M11 5.5h1.8v9H11" fill="#fdf6dc" stroke="#e0ae4a"/><path d="M12 9.5v3" stroke="#3f8fe0" stroke-width="1.2"/><path d="M2 2h8v4" fill="none" stroke="#fdf0c0" stroke-width="0.8" opacity="0.6"/></svg>
<div class="a" style="left:2px;top:184px;width:139px;height:16px;overflow:hidden"><div class="t" style="left:41px;top:2px;letter-spacing:0.25px">EditPlus v4.3.0</div></div>
<svg class="ico" style="left:27px;top:204px" width="14" height="15" viewBox="0 0 14 15"><path d="M0.5 0.5h10.5v14h-10.5z" fill="#f8e3a0" stroke="#e0ae4a"/><path d="M11 5.5h1.8v9H11" fill="#fdf6dc" stroke="#e0ae4a"/><path d="M12 9.5v3" stroke="#3f8fe0" stroke-width="1.2"/><path d="M2 2h8v4" fill="none" stroke="#fdf0c0" stroke-width="0.8" opacity="0.6"/></svg>
<div class="a" style="left:2px;top:204px;width:139px;height:16px;overflow:hidden"><div class="t" style="left:46px;top:2px;letter-spacing:0.25px">EditPlus</div></div>
<svg class="ico" style="left:32px;top:223px" width="14" height="15" viewBox="0 0 14 15"><path d="M0.5 0.5h10.5v14h-10.5z" fill="#f8e3a0" stroke="#e0ae4a"/><path d="M11 5.5h1.8v9H11" fill="#fdf6dc" stroke="#e0ae4a"/><path d="M12 9.5v3" stroke="#3f8fe0" stroke-width="1.2"/><path d="M2 2h8v4" fill="none" stroke="#fdf0c0" stroke-width="0.8" opacity="0.6"/></svg>
<div class="a" style="left:2px;top:223px;width:139px;height:16px;overflow:hidden"><div class="t" style="left:51px;top:2px;letter-spacing:0.25px">EditPlus_v4.3.0.2</div></div>
<div class="a" style="left:3px;top:242px;width:138px;height:20px;background:#d9d9d9"></div>
<svg class="ico" style="left:38px;top:244px" width="13" height="16" viewBox="0 0 13 16"><path d="M0.5 0.5h6l5 2v13h-11z" fill="#f0d27a" stroke="#d8a848" stroke-width="0.8"/><path d="M2 1.5v13M4 1.5v13" stroke="#fbeab0" stroke-width="1"/><path d="M7 3.5l4.5-1.5v13l-4.5 0.5z" fill="#f8e3a0" stroke="#e0ae4a" stroke-width="0.8"/><path d="M10.5 9v3.5" stroke="#3f8fe0" stroke-width="1.2"/></svg>
<div class="a" style="left:2px;top:243px;width:139px;height:16px;overflow:hidden"><div class="t" style="left:57px;top:2px;letter-spacing:0.25px">EditPlus</div></div>
<div class="a" style="left:2px;top:332px;width:140px;height:16px;background:#f0f0f0"></div>
<div class="a" style="left:20px;top:333px;width:49px;height:14px;background:#cdcdcd"></div>
<svg class="ico" style="left:8px;top:336px" width="7" height="8" viewBox="0 0 7 8"><path d="M5 0.8L1.5 4 5 7.2" fill="none" stroke="#606060" stroke-width="2.2"/></svg>
<svg class="ico" style="left:129px;top:336px" width="7" height="8" viewBox="0 0 7 8"><path d="M1.5 0.8L5 4 1.5 7.2" fill="none" stroke="#606060" stroke-width="2.2"/></svg>
<div class="a" style="left:1px;top:354px;width:142px;height:91px;background:#fff;border:1px solid #828790"></div>
<div class="t" style="left:5px;top:358px;font-size:12px;color:#000;letter-spacing:0.2px">!导入激活密钥.reg</div>
<div class="t" style="left:5px;top:375px;font-size:12px;color:#000;letter-spacing:0.3px">949.chm</div>
<div class="t" style="left:5px;top:392px;font-size:12px;color:#000;letter-spacing:0px">ANSI.CTL</div>
<div class="t" style="left:5px;top:409px;font-size:12px;color:#000;letter-spacing:0.6px">codepage.txt</div>
<div class="t" style="left:5px;top:426px;font-size:12px;color:#000;letter-spacing:0px">CONTROL.CTL</div>
<div class="a" style="left:125px;top:355px;width:17px;height:89px;background:#f0f0f0"></div>
<div class="a" style="left:126px;top:372px;width:14px;height:17px;background:#cdcdcd"></div>
<svg class="ico" style="left:129px;top:361px" width="8" height="7" viewBox="0 0 8 7"><path d="M0.8 5.2L4 1.8 7.2 5.2" fill="none" stroke="#606060" stroke-width="2.2"/></svg>
<svg class="ico" style="left:129px;top:431px" width="8" height="7" viewBox="0 0 8 7"><path d="M0.8 1.8L4 5.2 7.2 1.8" fill="none" stroke="#606060" stroke-width="2.2"/></svg>
<div class="a" style="left:1px;top:447px;width:142px;height:24px;background:#e1e1e1;border:1px solid #adadad"></div>
<div class="t" style="left:5px;top:454px;font-size:12px;color:#000;">所有文件 (*.*)</div>
<svg class="ico" style="left:130px;top:458px" width="8" height="5" viewBox="0 0 8 5"><path d="M0.5 0.5L4 4 7.5 0.5" fill="none" stroke="#555" stroke-width="1.1"/></svg>
<div class="a" style="left:146px;top:103px;width:1px;height:368px;background:#a0a0a0"></div>
<div class="a" style="left:147px;top:103px;width:1px;height:368px;background:#696969"></div>
<div class="a" style="left:146px;top:103px;width:606px;height:1px;background:#6f6f6f"></div>
<div class="a" style="left:148px;top:104px;width:604px;height:366px;background:#fff"></div>
<div class="a" style="left:148px;top:104px;width:587px;height:14px;background:#f0f0f0"></div>
<div class="a" style="left:148px;top:118px;width:586px;height:1px;background:#000"></div>
<div class="code" style="left:188px;top:104px;color:#000080">––––+––––1––––+––––2––––+––––3––––+––––4––––+––––5––––+––––6––––+––––7––––+––––</div>
<div class="a" style="left:188px;top:104px;width:1px;height:14px;background:#000080"></div>
<div class="a" style="left:202px;top:104px;width:7px;height:14px;background:#000080"></div>
<div class="a" style="left:203px;top:111px;width:5px;height:1px;background:#fff"></div>
<div class="a" style="left:734px;top:104px;width:18px;height:7px;background:#fff;border-right:2px solid #6f6f6f;border-bottom:2px solid #6f6f6f;border-left:1px solid #e8e8e8"></div>
<div class="a" style="left:735px;top:111px;width:16px;height:359px;background:#f0f0f0"></div>
<div class="a" style="left:735px;top:128px;width:15px;height:289px;background:#cdcdcd"></div>
<svg class="ico" style="left:738px;top:116px" width="8" height="8" viewBox="0 0 8 8"><path d="M0.5 6.5L4 2.5 7.5 6.5" fill="none" stroke="#606060" stroke-width="2.4"/></svg>
<svg class="ico" style="left:738px;top:458px" width="8" height="8" viewBox="0 0 8 8"><path d="M0.5 1.5L4 5.5 7.5 1.5" fill="none" stroke="#606060" stroke-width="2.4"/></svg>
<div class="a" style="left:148px;top:469px;width:604px;height:1px;background:#e3e3e3"></div>
<div class="ln" style="left:165px;top:121px">1</div>
<div class="code" style="left:188px;top:121px">&lt;!doctype html&gt;</div>
<div class="ln" style="left:165px;top:135px">2</div>
<div class="code" style="left:188px;top:135px">&lt;html <span class="r">lang</span>=<span class="m">"en"</span>&gt;</div>
<div class="ln" style="left:165px;top:149px">3</div>
<div class="code" style="left:188px;top:149px"> &lt;head&gt;</div>
<div class="ln" style="left:165px;top:163px">4</div>
<div class="code" style="left:188px;top:163px">  &lt;meta <span class="r">charset</span>=<span class="m">"UTF-8"</span>&gt;</div>
<div class="ln" style="left:165px;top:177px">5</div>
<div class="code" style="left:188px;top:177px">  &lt;meta <span class="r">name</span>=<span class="m">"Generator"</span> <span class="r">content</span>=<span class="m">"EditPlus®"</span>&gt;</div>
<div class="ln" style="left:165px;top:191px">6</div>
<div class="code" style="left:188px;top:191px">  &lt;meta <span class="r">name</span>=<span class="m">"Author"</span> <span class="r">content</span>=<span class="m">""</span>&gt;</div>
<div class="ln" style="left:165px;top:205px">7</div>
<div class="code" style="left:188px;top:205px">  &lt;meta <span class="r">name</span>=<span class="m">"Keywords"</span> <span class="r">content</span>=<span class="m">""</span>&gt;</div>
<div class="ln" style="left:165px;top:219px">8</div>
<div class="code" style="left:188px;top:219px">  &lt;meta <span class="r">name</span>=<span class="m">"Description"</span> <span class="r">content</span>=<span class="m">""</span>&gt;</div>
<div class="ln" style="left:165px;top:233px">9</div>
<div class="code" style="left:188px;top:233px">  &lt;title&gt;<span class="k">Document</span>&lt;/title&gt;</div>
<div class="ln" style="left:158px;top:247px">10</div>
<div class="code" style="left:188px;top:247px"> &lt;/head&gt;</div>
<div class="ln" style="left:158px;top:261px">11</div>
<div class="code" style="left:188px;top:261px"> &lt;body&gt;</div>
<div class="ln" style="left:158px;top:275px">12</div>
<div class="ln" style="left:158px;top:289px">13</div>
<div class="code" style="left:188px;top:289px"> &lt;/body&gt;</div>
<div class="ln" style="left:158px;top:303px">14</div>
<div class="code" style="left:188px;top:303px">&lt;/html&gt;</div>
<div class="ln" style="left:158px;top:317px">15</div>
<div class="a" style="left:177px;top:137px;width:9px;height:9px;border:1px solid #8c8c8c;background:#fff"></div>
<div class="a" style="left:178px;top:141px;width:7px;height:1px;background:#8c8c8c"></div>
<div class="a" style="left:177px;top:151px;width:9px;height:9px;border:1px solid #8c8c8c;background:#fff"></div>
<div class="a" style="left:178px;top:155px;width:7px;height:1px;background:#8c8c8c"></div>
<svg class="ico" style="left:150px;top:276px" width="5" height="10" viewBox="0 0 5 10"><path d="M0 0l5 5-5 5z" fill="#000080"/></svg>
<div class="a" style="left:146px;top:470px;width:606px;height:26px;background:#fff"></div>
<div class="a" style="left:0px;top:471px;width:752px;height:25px;background:#fff"></div>
<div class="a" style="left:1px;top:471px;width:145px;height:1px;background:#fff"></div>
<svg class="ico" style="left:5px;top:475px" width="14" height="15" viewBox="0 0 14 15"><path d="M0.5 0.5h10.5v14h-10.5z" fill="#f8e3a0" stroke="#e0ae4a"/><path d="M11 5.5h1.8v9H11" fill="#fdf6dc" stroke="#e0ae4a"/><path d="M12 9.5v3" stroke="#3f8fe0" stroke-width="1.2"/></svg>
<div class="a" style="left:26px;top:472px;width:122px;height:23px;background:#cce8ff;border:1px solid #99d1ff;border-right:1px dotted #4aa0f0"></div>
<svg class="ico" style="left:33px;top:480px" width="8" height="8" viewBox="0 0 8 8"><path d="M3.5 0.5L7 4 3.5 7.5 0 4z" fill="#e0622a" stroke="#7a2a1a" stroke-width="0.8"/></svg>
<div class="t" style="left:43px;top:478px;font-size:12px;color:#000;">新的文档 1.html</div>
<svg class="ico" style="left:136px;top:478px" width="10" height="10" viewBox="0 0 10 10"><path d="M1.5 1.5l6.5 6.5M8 1.5L1.5 8" stroke="#a8a8a8" stroke-width="3" stroke-linecap="round"/><path d="M1.5 1.5l6.5 6.5M8 1.5L1.5 8" stroke="#fafafa" stroke-width="1.4" stroke-linecap="round"/><circle cx="1.6" cy="8" r="1" fill="#b04020"/><circle cx="8" cy="8" r="1" fill="#b04020"/></svg>
<div class="a" style="left:0px;top:496px;width:752px;height:2px;background:#d9d9d9"></div>
<div class="a" style="left:0px;top:498px;width:752px;height:18px;background:#f0f0f0"></div>
<div class="t" style="left:3px;top:502px;font-size:12px;color:#000;">如需帮助，请按键盘 F1 键</div>
<div class="a" style="left:187px;top:500px;width:38px;height:15px;background:#1ea52e;border:1px solid #8fd49a"></div>
<div class="a" style="left:259px;top:499px;width:1px;height:16px;background:#d6d6d6"></div>
<div class="a" style="left:333px;top:499px;width:1px;height:16px;background:#d6d6d6"></div>
<div class="a" style="left:389px;top:499px;width:1px;height:16px;background:#d6d6d6"></div>
<div class="a" style="left:446px;top:499px;width:1px;height:16px;background:#d6d6d6"></div>
<div class="a" style="left:503px;top:499px;width:1px;height:16px;background:#d6d6d6"></div>
<div class="a" style="left:560px;top:499px;width:1px;height:16px;background:#d6d6d6"></div>
<div class="a" style="left:592px;top:499px;width:1px;height:16px;background:#d6d6d6"></div>
<div class="a" style="left:624px;top:499px;width:1px;height:16px;background:#d6d6d6"></div>
<div class="a" style="left:656px;top:499px;width:1px;height:16px;background:#d6d6d6"></div>
<div class="a" style="left:733px;top:499px;width:1px;height:16px;background:#d6d6d6"></div>
<div class="t" style="left:264px;top:502px;font-size:12px;color:#000;">列 3</div>
<div class="t" style="left:337px;top:502px;font-size:12px;color:#000;">15</div>
<div class="t" style="left:394px;top:502px;font-size:12px;color:#000;">00</div>
<div class="t" style="left:450px;top:502px;font-size:12px;color:#000;">PC</div>
<div class="t" style="left:509px;top:502px;font-size:12px;color:#000;">UTF-8</div>
<div class="t" style="left:725px;top:502px;font-size:12px;color:#000;">0</div>
<div class="a" style="left:748px;top:512px;width:2px;height:2px;background:#a8b0bc"></div>
<div class="a" style="left:748px;top:509px;width:2px;height:2px;background:#a8b0bc"></div>
<div class="a" style="left:745px;top:512px;width:2px;height:2px;background:#a8b0bc"></div>
<div class="a" style="left:748px;top:506px;width:2px;height:2px;background:#a8b0bc"></div>
<div class="a" style="left:745px;top:509px;width:2px;height:2px;background:#a8b0bc"></div>
<div class="a" style="left:742px;top:512px;width:2px;height:2px;background:#a8b0bc"></div>
<div class="a" style="left:0px;top:0px;width:1px;height:516px;background:#1f7ad8"></div>
</body></html>
